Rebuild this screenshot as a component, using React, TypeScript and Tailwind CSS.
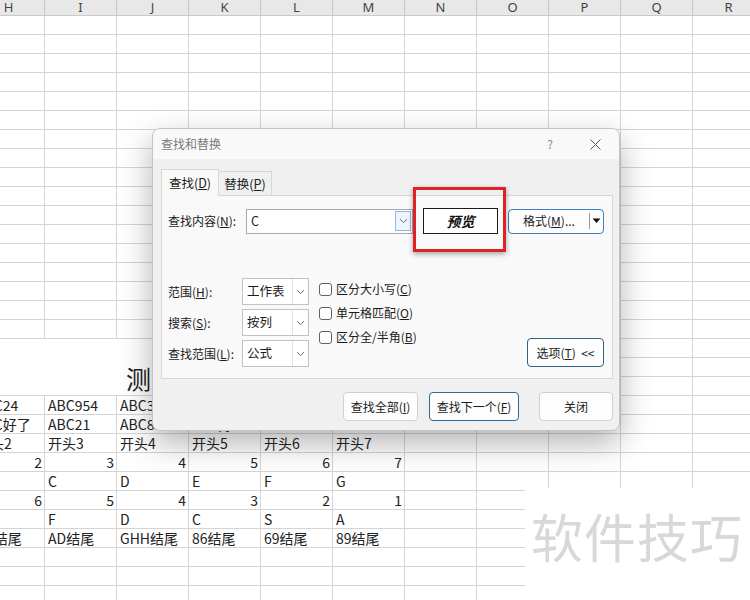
import React from "react";

const COLS = ["H", "I", "J", "K", "L", "M", "N", "O", "P", "Q", "R"];
const ROWS = 31;

const data: Record<number, (string | number)[]> = {
  21: ["ABC24", "ABC954", "ABC321", "ABC665", "ABC77", "ABC102"],
  22: ["ABC好了", "ABC21", "ABC85", "ABC好", "ABC9", "ABC0"],
  23: ["开头2", "开头3", "开头4", "开头5", "开头6", "开头7"],
  24: [2, 3, 4, 5, 6, 7],
  25: ["", "C", "D", "E", "F", "G"],
  26: [6, 5, 4, 3, 2, 1],
  27: ["", "F", "D", "C", "S", "A"],
  28: ["AB结尾", "AD结尾", "GHH结尾", "86结尾", "69结尾", "89结尾"],
};

const font = "font-['Noto_Sans_CJK_SC','Noto_Sans',sans-serif]";

function Chevron({ className = "" }: { className?: string }) {
  return (
    <svg width="9" height="6" viewBox="0 0 9 6" className={className}>
      <path d="M1 1.2 L4.5 4.5 L8 1.2" fill="none" stroke="#6b6b6b" strokeWidth="1" />
    </svg>
  );
}

function Sheet() {
  const cells: React.ReactNode[] = [];
  COLS.forEach((c) => {
    cells.push(
      <div key={"h" + c} className="flex items-center justify-center overflow-visible border-r border-b border-[#c9c9c9] bg-[#e8e8e8] text-[13px] leading-[15px] text-[#444] font-['Noto_Sans',sans-serif]">
        {c}
      </div>
    );
  });
  for (let r = 1; r <= ROWS; r++) {
    for (let ci = 0; ci < COLS.length; ci++) {
      if (r >= 18 && r <= 20 && ci < 6) {
        if (r === 18 && ci === 0) {
          cells.push(
            <div key="title" className="col-span-6 row-span-3 flex items-end justify-center border-r border-b border-[#d4d4d4] bg-white pb-[2px] text-[25px] leading-[30px] text-[#222]">
              测试数据表
            </div>
          );
        }
        continue;
      }
      const v = data[r]?.[ci];
      const isNum = typeof v === "number";
      cells.push(
        <div
          key={r + "-" + ci}
          className={`flex items-end whitespace-nowrap border-r border-b border-[#d4d4d4] bg-white text-[14px] leading-[18px] text-[#222] ${isNum ? "justify-end pr-[2px]" : "pl-[3px]"}`}
        >
          {v ?? ""}
        </div>
      );
    }
  }
  return (
    <div className={`ml-[-27px] grid grid-cols-[repeat(11,72px)] grid-rows-[16px_repeat(31,19px)] ${font}`}>
      {cells}
    </div>
  );
}

function Btn({ children, className = "" }: { children: React.ReactNode; className?: string }) {
  return (
    <div className={`flex h-[29px] items-center justify-center rounded-[4px] border bg-[#fdfdfd] text-[12px] text-[#1b1b1b] ${className}`}>
      {children}
    </div>
  );
}

function Select({ value }: { value: string }) {
  return (
    <div className="flex h-[27px] w-[67px] items-center border border-[#c2c2c2] bg-white">
      <span className="flex-1 pl-[4px] text-[12.5px] text-[#1b1b1b]">{value}</span>
      <div className="flex h-full w-[16px] items-center justify-center border-l border-[#e2e2e2]">
        <Chevron />
      </div>
    </div>
  );
}

function Check({ children }: { children: React.ReactNode }) {
  return (
    <div className="flex h-[14px] items-center gap-[4px]">
      <div className="h-[13px] w-[13px] rounded-[3px] border border-[#616161] bg-white" />
      <span className="text-[12px] text-[#1b1b1b]">{children}</span>
    </div>
  );
}

function Dialog() {
  return (
    <div className={`absolute left-[152px] top-[128px] h-[303px] w-[468px] overflow-hidden rounded-[8px] border border-[#c4c4c4] bg-[#f0f0f0] shadow-[0_12px_32px_rgba(0,0,0,0.3)] ${font}`}>
      <div className="flex h-[30px] items-center bg-[#f9f9f9] pl-[8px] text-[12px] text-[#7a7a7a]">
        <span className="flex-1">查找和替换</span>
        <span className="w-[14px] text-center text-[12px] text-[#8a8a8a]">?</span>
        <div className="ml-[31px] mr-[17px] flex h-[14px] w-[14px] items-center justify-center">
          <svg width="11" height="11" viewBox="0 0 11 11">
            <path d="M0.5 0.5 L10.5 10.5 M10.5 0.5 L0.5 10.5" stroke="#555" strokeWidth="1" />
          </svg>
        </div>
      </div>

      <div className="px-[8px] pt-[10px]">
        <div className="flex items-end">
          <div className="relative z-10 mb-[-1px] flex h-[27px] w-[58px] items-center justify-center border border-b-0 border-[#d6d6d6] bg-[#f9f9f9] text-[12.5px] text-[#1b1b1b]">
            查找(<u>D</u>)
          </div>
          <div className="mb-[-1px] flex h-[25px] w-[53px] items-center justify-center border border-l-0 border-b-0 border-[#d6d6d6] bg-[#f0f0f0] text-[12.5px] text-[#1b1b1b]">
            替换(<u>P</u>)
          </div>
        </div>

        <div className="relative h-[184px] w-[452px] border border-[#d6d6d6] bg-[#f9f9f9]">
          <div className="flex items-center pl-[6px] pt-[12px]">
            <span className="w-[78px] text-[12px] text-[#1b1b1b]">查找内容(<u>N</u>):</span>
            <div className="flex h-[25px] w-[167px] items-center border border-[#a8a8a8] bg-white">
              <span className="flex-1 pl-[4px] text-[12.5px] text-[#1b1b1b]">C</span>
              <div className="mr-[1px] flex h-[20px] w-[16px] items-center justify-center border border-[#8cbbe8] bg-[#eef5fc]">
                <Chevron />
              </div>
            </div>
            <div className="ml-[10px] flex h-[26px] w-[75px] items-center justify-center border border-[#1a1a1a] bg-white text-[14px] font-bold italic text-[#111]">
              预览
            </div>
            <div className="ml-[10px] flex h-[25px] w-[96px] items-center rounded-[4px] border border-[#3d7fc0] bg-[#fdfdfd]">
              <span className="flex-1 text-center text-[12px] text-[#1b1b1b]">格式(<u>M</u>)...</span>
              <div className="h-[16px] border-l border-[#9a9a9a]" />
              <svg width="11" height="6" viewBox="0 0 11 6" className="mx-[1px]">
                <path d="M1.5 0.5 L9.5 0.5 L5.5 5 Z" fill="#111" />
              </svg>
            </div>
          </div>

          <div className="mt-[44px] flex pl-[6px]">
            <div className="flex flex-col gap-[4px]">
              {[
                ["范围", "H", "工作表"],
                ["搜索", "S", "按列"],
                ["查找范围", "L", "公式"],
              ].map(([l, k, v]) => (
                <div key={k} className="flex items-center">
                  <span className="w-[74px] text-[12px] text-[#1b1b1b]">
                    {l}(<u>{k}</u>):
                  </span>
                  <Select value={v} />
                </div>
              ))}
            </div>
            <div className="ml-[10px] flex flex-col gap-[10px] pt-[4px]">
              <Check>区分大小写(<u>C</u>)</Check>
              <Check>单元格匹配(<u>O</u>)</Check>
              <Check>区分全/半角(<u>B</u>)</Check>
            </div>
            <div className="ml-auto mr-[8px] flex items-end">
              <Btn className="w-[77px] border-[#2f6385]">
                选项(<u>T</u>)&nbsp; &lt;&lt;
              </Btn>
            </div>
          </div>
        </div>
      </div>

      <div className="mt-[13px] flex justify-end pr-[6px]">
        <Btn className="w-[75px] border-[#d0d0d0]">查找全部(<u>I</u>)</Btn>
        <Btn className="ml-[11px] w-[90px] border-[#2b6a9a]">查找下一个(<u>F</u>)</Btn>
        <Btn className="ml-[20px] w-[74px] border-[#d0d0d0]">关闭</Btn>
      </div>

      <div className="absolute left-[260px] top-[58px] h-[65px] w-[93px] border-[3px] border-[#db2328] shadow-[0_2px_5px_rgba(0,0,0,0.35)]" />
    </div>
  );
}

export default function App() {
  return (
    <div className="relative h-[600px] w-[750px] overflow-hidden bg-white">
      <Sheet />
      <Dialog />
      <div className={`absolute left-[525px] top-[488px] h-[112px] w-[225px] bg-white pl-[6px] pt-[18px] text-[52px] leading-[60px] tracking-[1px] text-[#d8d8d8] ${font}`}>
        软件技巧
      </div>
    </div>
  );
}
